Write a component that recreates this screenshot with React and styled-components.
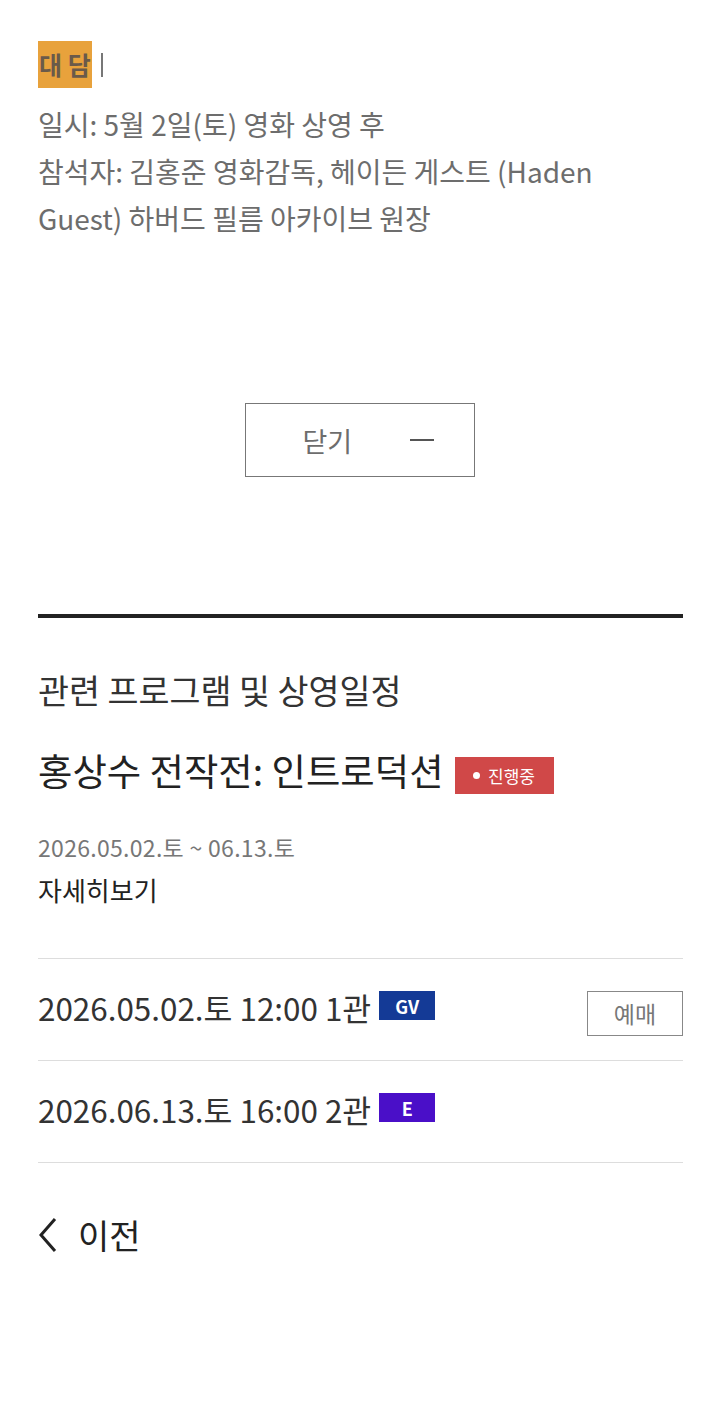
import React from 'react';
import styled, { createGlobalStyle } from 'styled-components';

const GlobalStyle = createGlobalStyle`
  body {
    margin: 0;
    background: #fff;
    font-family: "Noto Sans CJK KR", "Noto Sans", sans-serif;
  }
`;

const Page = styled.div`
  padding: 41px 37px 0 38px;
  width: 720px;
  box-sizing: border-box;
`;

const Heading = styled.div`
  display: flex;
  align-items: center;
  gap: 9px;
`;

const Tag = styled.span`
  background: #e8a23c;
  color: #6a5a4a;
  font-size: 25px;
  font-weight: 700;
  line-height: 47px;
  height: 47px;
  padding: 0 1px;
`;

const Bar = styled.span`
  width: 2px;
  height: 24px;
  background: #777;
`;

const Info = styled.div`
  margin-top: 13px;
  color: #6d6d6d;
  font-size: 28px;
  line-height: 47px;
  width: 580px;
`;

const CloseWrap = styled.div`
  display: flex;
  justify-content: center;
  margin-top: 161px;
  padding-right: 2px;
`;

const CloseButton = styled.button`
  width: 230px;
  height: 74px;
  border: 1px solid #777;
  background: #fff;
  display: flex;
  align-items: center;
  justify-content: space-between;
  padding: 0 40px 0 57px;
  box-sizing: border-box;
  font-family: inherit;
  font-size: 27px;
  color: #6d6d6d;
`;

const Dash = styled.span`
  width: 24px;
  height: 2px;
  background: #555;
`;

const ThickRule = styled.hr`
  margin: 137px 0 0;
  border: 0;
  height: 4px;
  background: #222;
`;

const SectionTitle = styled.h2`
  margin: 48px 0 0;
  font-size: 33.7px;
  font-weight: 400;
  color: #333;
  line-height: 48px;
`;

const ProgramRow = styled.div`
  display: flex;
  align-items: center;
  gap: 11px;
  margin-top: 31px;
`;

const ProgramTitle = styled.h3`
  margin: 0;
  font-size: 37.4px;
  font-weight: 400;
  color: #222;
  line-height: 50px;
`;

const Status = styled.span`
  background: #d04848;
  color: #fff;
  font-size: 17px;
  height: 37px;
  width: 99px;
  display: inline-flex;
  align-items: center;
  justify-content: center;
  gap: 8px;
  margin-top: 11px;
  &::before {
    content: '';
    width: 7px;
    height: 7px;
    border-radius: 50%;
    background: #fff;
  }
`;

const Period = styled.div`
  margin-top: 35px;
  font-size: 23px;
  color: #777;
  letter-spacing: 0.3px;
  line-height: 34px;
`;

const More = styled.div`
  font-size: 26px;
  color: #222;
  line-height: 40px;
  margin-top: 6px;
`;

const Schedule = styled.ul`
  list-style: none;
  padding: 0;
  margin: 48px 0 0;
  border-top: 1px solid #ddd;
`;

const Slot = styled.li`
  display: flex;
  align-items: center;
  justify-content: space-between;
  height: 101px;
  border-bottom: 1px solid #ddd;
`;

const SlotText = styled.div`
  display: flex;
  align-items: center;
  gap: 8px;
  font-size: 31.4px;
  color: #333;
  margin-top: -4px;
`;

const Kind = styled.span`
  background: ${p => p.color};
  color: #fff;
  font-size: 18px;
  font-weight: 700;
  width: 56px;
  height: 29px;
  display: inline-flex;
  align-items: center;
  justify-content: center;
  margin-top: -4px;
`;

const Reserve = styled.button`
  width: 96px;
  height: 45px;
  border: 1px solid #888;
  background: #fff;
  font-family: inherit;
  font-size: 23px;
  color: #777;
  margin-top: 7px;
`;

const Prev = styled.a`
  display: flex;
  align-items: center;
  gap: 20px;
  margin-top: 49px;
  font-size: 34px;
  color: #222;
  line-height: 46px;
`;

export default function App() {
  return (
    <Page>
      <GlobalStyle />
      <Heading>
        <Tag>대 담</Tag>
        <Bar />
      </Heading>
      <Info>
        일시: 5월 2일(토) 영화 상영 후<br />
        참석자: 김홍준 영화감독, 헤이든 게스트 (Haden Guest) 하버드 필름 아카이브 원장
      </Info>
      <CloseWrap>
        <CloseButton>
          <span>닫기</span>
          <Dash />
        </CloseButton>
      </CloseWrap>
      <ThickRule />
      <SectionTitle>관련 프로그램 및 상영일정</SectionTitle>
      <ProgramRow>
        <ProgramTitle>홍상수 전작전: 인트로덕션</ProgramTitle>
        <Status>진행중</Status>
      </ProgramRow>
      <Period>2026.05.02.토 ~ 06.13.토</Period>
      <More>자세히보기</More>
      <Schedule>
        <Slot>
          <SlotText>
            2026.05.02.토 12:00 1관
            <Kind color="#143a96">GV</Kind>
          </SlotText>
          <Reserve>예매</Reserve>
        </Slot>
        <Slot>
          <SlotText>
            2026.06.13.토 16:00 2관
            <Kind color="#4a0fc8">E</Kind>
          </SlotText>
        </Slot>
      </Schedule>
      <Prev>
        <svg width="20" height="36" viewBox="0 0 20 36">
          <path d="M17 2 L3 18 L17 34" fill="none" stroke="#222" strokeWidth="3" />
        </svg>
        이전
      </Prev>
    </Page>
  );
}
